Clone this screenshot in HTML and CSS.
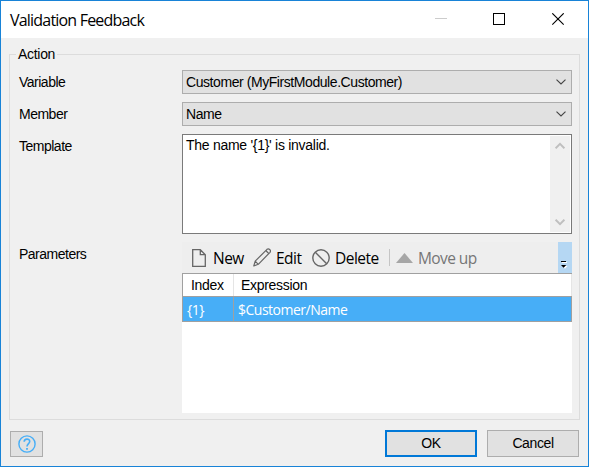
FILE: index.html
```html
<!DOCTYPE html>
<html lang="en">
<head>
<meta charset="utf-8">
<title>Validation Feedback</title>
<link rel="stylesheet" href="styles.css">
</head>
<body>
<div class="window">
  <header class="titlebar">
    <h1 class="title">Validation Feedback</h1>
    <svg class="controls" width="130" height="14" viewBox="0 0 130 14" fill="none">
      <path d="M0 5.5H12" stroke="#ccc"/>
      <rect x="58.5" y="0.5" width="11" height="11" stroke="#000"/>
      <path d="M117.3 .3L128.7 11.7M128.7 .3L117.3 11.7" stroke="#000" stroke-width="1.1"/>
    </svg>
  </header>
  <fieldset class="group">
    <legend class="legend">Action</legend>
    <div class="field">
      <span class="label">Variable</span>
      <div class="combo"><span>Customer (MyFirstModule.Customer)</span>
        <svg width="10" height="6" viewBox="0 0 10 6" fill="none"><path d="M.5 .6L5 5L9.500 .6" stroke="#444" stroke-width="1.1"/></svg></div>
    </div>
    <div class="field">
      <span class="label">Member</span>
      <div class="combo"><span>Name</span>
        <svg width="10" height="6" viewBox="0 0 10 6" fill="none"><path d="M.5 .6L5 5L9.500 .6" stroke="#444" stroke-width="1.1"/></svg></div>
    </div>
    <div class="field">
      <span class="label">Template</span>
      <div class="textarea"><span class="message">The name '{1}' is invalid.</span>
        <div class="scrollbar">
          <svg width="10" height="8" viewBox="0 0 10 8" fill="none"><path d="M.6 6.300L5 1.900L9.400 6.300" stroke="#bfbfbf" stroke-width="2"/></svg>
          <svg width="10" height="8" viewBox="0 0 10 8" fill="none"><path d="M.6 1.700L5 6.100L9.400 1.700" stroke="#bfbfbf" stroke-width="2"/></svg>
        </div>
      </div>
    </div>
    <div class="field">
      <span class="label">Parameters</span>
      <div class="grid">
        <div class="toolbar">
          <div class="tool new">
            <svg width="16" height="18" viewBox="0 0 16 18" fill="none" stroke="#666" stroke-width="1.300"><path d="M1.700 .7H9.300L14.300 5.700V17.300H1.700ZM9.300 .7V5.700H14.300"/></svg>
            <span>New</span>
          </div>
          <div class="tool edit">
            <svg width="18" height="19" viewBox="0 0 18 19" fill="none" stroke="#666" stroke-width="1.200" stroke-linejoin="round"><path d="M.8 18L2.200 13.200L14 1.300Q15.300 .2 16.700 1.500T17 4.300L5.300 16.300ZM2.200 13.200L5.300 16.300M12.800 2.500L15.700 5.500"/></svg>
            <span>Edit</span>
          </div>
          <div class="tool delete">
            <svg width="18" height="18" viewBox="0 0 18 18" fill="none" stroke="#666" stroke-width="1.400"><circle cx="9" cy="9" r="8.200"/><path d="M3.300 3.300L14.700 14.700"/></svg>
            <span>Delete</span>
          </div>
          <i class="divider"></i>
          <div class="tool move">
            <svg width="17" height="10" viewBox="0 0 17 10"><path d="M8.500 0L17 10H0Z" fill="#a6a6a6"/></svg>
            <span>Move up</span>
          </div>
          <div class="overflow">
            <svg width="8" height="10" viewBox="0 0 8 10"><path d="M2 3H7V2H2ZM2.500 6H7.500L5 8.800Z" fill="#fff"/><path d="M1 1H6V2H1ZM1 5H6.200L3.600 7.700Z" fill="#000"/></svg>
          </div>
        </div>
        <div class="table">
          <div class="row head"><span class="cell index">Index</span><span class="cell expr">Expression</span></div>
          <div class="row selected"><span class="cell index">{1}</span><span class="cell expr">$Customer/Name</span></div>
        </div>
      </div>
    </div>
  </fieldset>
  <footer class="footer">
    <button class="btn help" aria-label="Help">
      <svg width="18" height="18" viewBox="0 0 18 18" fill="none" stroke="#46aef7" stroke-width="1.400"><circle cx="9" cy="9" r="8.100"/><path d="M6.200 6.800C6.200 3.300 11.700 3.300 11.700 6.600C11.700 8.700 9 8.700 9 11.600" stroke-width="1.600"/><path d="M9 13V14.700" stroke-width="1.800"/></svg>
    </button>
    <button class="btn ok">OK</button>
    <button class="btn cancel">Cancel</button>
  </footer>
</div>
</body>
</html>
```
FILE: styles.css
```css
* { box-sizing: border-box; }
body { margin: 0; font: 14px/16px "Liberation Sans", sans-serif; letter-spacing: -0.5px; color: #000; }
svg { display: block; flex: none; }
span { white-space: nowrap; }
.window { width: 589px; height: 467px; border: 1px solid #1883d7; background: #f0f0f0; }
.titlebar { height: 37px; background: #fff; display: flex; justify-content: space-between; padding: 12px 23px 0 9px; }
.title { margin: -4px 0 0; font: 400 16px/22px "Open Sans", sans-serif; letter-spacing: -0.8px; white-space: nowrap; }
.group { margin: 8px 8px 0; padding: 8px 7px 0 9px; height: 374px; border: 1px solid #dcdcdc; min-width: 0; }
.legend { padding: 0 2px; margin-left: -3px; height: 16px; letter-spacing: -0.3px; }
.field { display: flex; justify-content: space-between; margin-bottom: 8px; }
.label { padding-top: 4px; }
.combo { width: 390px; height: 24px; border: 1px solid #adadad; background: #e1e1e1; display: flex; align-items: center; justify-content: space-between; padding: 0 5px 0 3px; letter-spacing: -0.43px; }
.textarea { width: 390px; height: 100px; border: 1px solid #7a7a7a; background: #fff; display: flex; justify-content: space-between; padding: 1px; }
.message { padding: 1px 0 0 2px; letter-spacing: -0.28px; }
.scrollbar { width: 20px; background: #f0f0f0; display: flex; flex-direction: column; justify-content: space-between; align-items: center; padding: 6px 1px 6px 0; }
.grid { width: 390px; }
.toolbar { height: 31px; background: #eee; display: flex; align-items: center; position: relative; font: 15.5px/22px "Open Sans", sans-serif; }
.tool { display: flex; align-items: center; gap: 5px; letter-spacing: -0.5px; }
.new { margin-left: 9px; width: 62px; }
.new span { margin-left: 1px; }
.edit { width: 59px; }
.delete { width: 77px; }
.divider { width: 1px; height: 17px; background: #c5c5c5; margin-right: 6px; }
.move { color: #767676; letter-spacing: -0.6px; }
.overflow { position: absolute; right: 0; top: 0; width: 14px; height: 31px; background: #b5d7f3; padding: 18px 0 0 2px; }
.table { height: 140px; background: #fff; border-top: 1px solid #a0a0a0; }
.row { display: flex; border-left: 1px solid #a0a0a0; }
.head { height: 22px; line-height: 23px; border-right: 1px solid #e5e5e5; letter-spacing: -0.3px; }
.selected { height: 26px; background: #47aef7; color: #fff; border: 1px solid #a0a0a0; font: 14px/26px "Open Sans", sans-serif; letter-spacing: -0.5px; }
.index { width: 51px; border-right: 1px solid #e5e5e5; padding-left: 8px; }
.expr { padding-left: 7px; }
.selected .index { padding-left: 4px; border-color: #a0a0a0; }
.selected .expr { padding-left: 4px; }
.footer { display: flex; align-items: flex-end; padding: 10px 9px 0; }
.btn { font: inherit; letter-spacing: -0.4px; color: #000; width: 92px; height: 27px; padding: 0 0 2px; border: 1px solid #adadad; background: #e1e1e1; display: flex; align-items: center; justify-content: center; }
.help { width: 33px; height: 26px; padding: 0; margin-right: auto; }
.ok { border: 2px solid #0078d7; margin-right: 10px; }
```
